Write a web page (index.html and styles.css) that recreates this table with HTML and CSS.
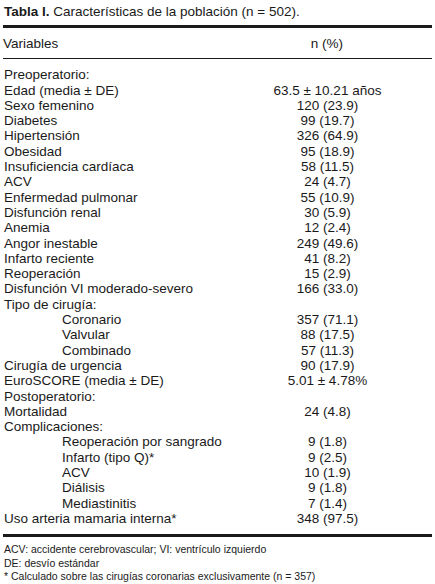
FILE: index.html
```html
<!DOCTYPE html>
<html>
<head>
    <title>Tabla I</title>
    <link rel="stylesheet" href="styles.css">
</head>
<body>
    <div class="container">
        <p class="caption"><b>Tabla I.</b> Características de la población (n = 502).</p>
        <table class="data">
            <thead>
                <tr><th class="label">Variables</th><th class="value">n (%)</th></tr>
            </thead>
            <tbody>
                <tr class="first"><td>Preoperatorio:</td><td></td></tr>
                <tr><td>Edad (media ± DE)</td><td class="value">63.5 ± 10.21 años</td></tr>
                <tr><td>Sexo femenino</td><td class="value">120 (23.9)</td></tr>
                <tr><td>Diabetes</td><td class="value">99 (19.7)</td></tr>
                <tr><td>Hipertensión</td><td class="value">326 (64.9)</td></tr>
                <tr><td>Obesidad</td><td class="value">95 (18.9)</td></tr>
                <tr><td>Insuficiencia cardíaca</td><td class="value">58 (11.5)</td></tr>
                <tr><td>ACV</td><td class="value">24 (4.7)</td></tr>
                <tr><td>Enfermedad pulmonar</td><td class="value">55 (10.9)</td></tr>
                <tr><td>Disfunción renal</td><td class="value">30 (5.9)</td></tr>
                <tr><td>Anemia</td><td class="value">12 (2.4)</td></tr>
                <tr><td>Angor inestable</td><td class="value">249 (49.6)</td></tr>
                <tr><td>Infarto reciente</td><td class="value">41 (8.2)</td></tr>
                <tr><td>Reoperación</td><td class="value">15 (2.9)</td></tr>
                <tr><td>Disfunción VI moderado-severo</td><td class="value">166 (33.0)</td></tr>
                <tr><td>Tipo de cirugía:</td><td></td></tr>
                <tr><td class="sub">Coronario</td><td class="value">357 (71.1)</td></tr>
                <tr><td class="sub">Valvular</td><td class="value">88 (17.5)</td></tr>
                <tr><td class="sub">Combinado</td><td class="value">57 (11.3)</td></tr>
                <tr><td>Cirugía de urgencia</td><td class="value">90 (17.9)</td></tr>
                <tr><td>EuroSCORE (media ± DE)</td><td class="value">5.01 ± 4.78%</td></tr>
                <tr><td>Postoperatorio:</td><td></td></tr>
                <tr><td>Mortalidad</td><td class="value">24 (4.8)</td></tr>
                <tr><td>Complicaciones:</td><td></td></tr>
                <tr><td class="sub">Reoperación por sangrado</td><td class="value">9 (1.8)</td></tr>
                <tr><td class="sub">Infarto (tipo Q)*</td><td class="value">9 (2.5)</td></tr>
                <tr><td class="sub">ACV</td><td class="value">10 (1.9)</td></tr>
                <tr><td class="sub">Diálisis</td><td class="value">9 (1.8)</td></tr>
                <tr><td class="sub">Mediastinitis</td><td class="value">7 (1.4)</td></tr>
                <tr class="last"><td>Uso arteria mamaria interna*</td><td class="value">348 (97.5)</td></tr>
            </tbody>
        </table>
        <div class="notes">
            <p>ACV: accidente cerebrovascular; VI: ventrículo izquierdo</p>
            <p>DE: desvío estándar</p>
            <p>* Calculado sobre las cirugías coronarias exclusivamente (n = 357)</p>
        </div>
    </div>
</body>
</html>
```

FILE: styles.css
```css
body {
    margin: 0;
    background-color: white;
    font-family: "Liberation Sans", Arial, sans-serif;
    color: #1a1a1a;
}

.container {
    padding: 4px 3px 0 3px;
}

.caption {
    margin: 0;
    padding-left: 1px;
    font-size: 13.5px;
    line-height: 15px;
}

.caption b {
    font-weight: bold;
}

.data {
    width: 429px;
    margin-top: 6px;
    border-collapse: collapse;
    font-size: 13.5px;
}

.data th,
.data td {
    padding: 0;
    font-weight: normal;
    line-height: 15.3px;
    vertical-align: top;
}

.data thead th {
    border-top: 3px solid #1a1a1a;
    border-bottom: 1px solid #1a1a1a;
    padding: 8px 0 7px 0;
}

.data .label {
    text-align: left;
    width: 215px;
}

.data td {
    padding-left: 1px;
    white-space: nowrap;
}

.data .value {
    text-align: center;
}

.data .sub {
    padding-left: 59px;
}

.data .first td {
    padding-top: 8px;
}

.data .last td {
    padding-bottom: 8px;
    border-bottom: 3px solid #1a1a1a;
}

.notes {
    margin-top: 6px;
    padding-left: 1px;
    font-size: 10.5px;
}

.notes p {
    margin: 0;
    line-height: 13.5px;
}
```
